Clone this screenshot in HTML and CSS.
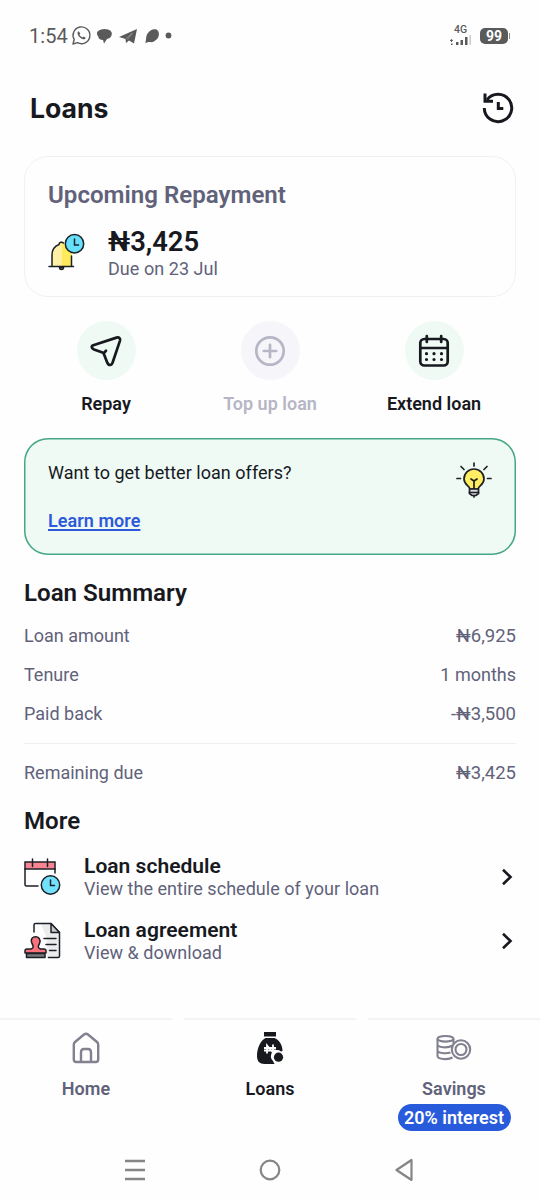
FILE: index.html
```html
<!DOCTYPE html>
<html lang="en">
<head>
<meta charset="utf-8">
<title>Loans</title>
<link rel="stylesheet" href="styles.css">
</head>
<body>
<div class="screen">
  <header class="status">
    <span class="status-time">1:54</span>
    <svg class="status-apps" width="106" height="22" viewBox="0 0 106 22" fill="none">
      <path d="M2 19 3.200 14.500A8.400 8.400 0 1 1 6.500 17.700Z" stroke="#5a5a5a" stroke-width="1.400" stroke-linejoin="round"/>
      <path d="M7.500 6.300c-2 1.500-.5 4.400 1.500 6.200s4.500 2.700 5.800.6l-2-1.600-1.400 1c-1.500-.7-2.300-1.600-2.900-2.900l.9-1.200Z" fill="#5a5a5a"/>
      <path d="M26 8c0-2 3-3 4-3.500 3-1 5-.5 7 0 3.500 1 4.500 3.500 3.500 6-1 2.500-2.500 3-4.500 3.500L33 18.500 32 15c-3 0-4.500-1-4.800-3.700C26 10 26 9 26 8Z" fill="#5a5a5a"/>
      <path d="M48 12 66 4 63 18.500 58 15.500 55 18 54.500 14Z" fill="#5a5a5a"/>
      <path d="m54.500 14 7-6-5 6.500" stroke="#aaa" stroke-width=".6"/>
      <path d="M74 17.500c2-2 0-6 3-9.500 2-3.500 6-4.500 8.500-3.500 3.500 2 3 7.500 0 10-2 2-4 3-7 2.500-1.500 0-2.500 1-4.500.5Z" fill="#5a5a5a"/>
      <circle cx="97.500" cy="10.500" r="2.900" fill="#5a5a5a"/>
    </svg>
    <span class="spacer"></span>
    <div class="signal">
      <span class="signal-label">4G</span>
      <svg width="22" height="11" viewBox="0 0 22 11"><g fill="#5a5a5a"><path d="M0 5.500 1.500 4 3 5.500V6H2v1H1V6H0ZM1 8.500h1.500V10H1Z"/><path d="M6 7h2.500v3H6ZM10.500 5H13v5h-2.500ZM15 2h2.500v8H15Z"/></g><path d="M19.500 0H21v10h-1.500Z" fill="#c9c9c9"/></svg>
    </div>
    <div class="battery">99</div>
  </header>

  <div class="title-bar">
    <h1>Loans</h1>
    <svg width="34" height="34" viewBox="0 0 34 34" fill="none" stroke="#17191f" stroke-width="3">
      <path d="M3.300 17A13.700 13.700 0 1 0 6 8.800"/>
      <path d="M4 2.500v7.800h8"/>
      <path d="M17.300 11v6.500h5"/>
    </svg>
  </div>

  <section class="repayment">
    <h2>Upcoming Repayment</h2>
    <div class="repayment-body">
      <svg width="38" height="38" viewBox="0 0 38 38" fill="none" stroke="#1d2026" stroke-width="1.500" stroke-linecap="round">
        <path d="M4 33V22C4 16 8 12.500 11 11.500c0-3 5-3 5-.5l8 10v12Z" fill="#ffea5b" stroke="none"/>
        <path d="M4 33V22C4 16 8 12.500 11 11.500l3-.5v22Z" fill="#fff0a5" stroke="none"/>
        <path d="M1 33.500h24.500M4 32.500V22c0-5 3-9 7-10.500 0-2.500 3-3 4.500-1.500M23.500 23v9.500"/>
        <path d="M11.500 34.500a2 2 0 0 0 4 0Z" fill="#e5a827"/>
        <circle cx="26.500" cy="10.800" r="9.200" fill="#67e0fb"/>
        <path d="M26.500 6v6h4"/>
      </svg>
      <div>
        <div class="amount">₦3,425</div>
        <div class="due">Due on 23 Jul</div>
      </div>
    </div>
  </section>

  <nav class="actions">
    <div class="action">
      <div class="disc"><svg width="34" height="34" viewBox="0 0 34 34" fill="none" stroke="#17191f" stroke-width="2.700" stroke-linejoin="round" stroke-linecap="round"><path d="M4.300 11.300 27.500 3.600C30 2.800 31.600 4.200 31 6.600L23.800 28C22.700 32 19.500 32 18 28L15 20.300C14.800 19.500 14.300 19 13.500 18.600L5 15.400C2.300 14.300 2 12.200 4.300 11.300ZM14.600 19.200 17 16.800"/></svg></div>
      <span>Repay</span>
    </div>
    <div class="action action-off">
      <div class="disc"><svg width="34" height="34" viewBox="0 0 34 34" fill="none" stroke="#b6b6c6" stroke-width="2.700" stroke-linecap="round"><circle cx="17" cy="17" r="13.700"/><path d="M10.800 17h12.400M17 10.800v12.400"/></svg></div>
      <span>Top up loan</span>
    </div>
    <div class="action">
      <div class="disc"><svg width="34" height="34" viewBox="0 0 34 34" fill="none" stroke="#17191f" stroke-width="2.700" stroke-linecap="round"><rect x="3.300" y="5" width="27.400" height="26.500" rx="4"/><path d="M3.500 14h27M9.800 2v6M24.200 2v6"/><path d="M9.500 19.700h.01M17 19.700h.01M24.500 19.700h.01M9.500 25.500h.01M17 25.500h.01M24.500 25.500h.01" stroke-width="3.200"/></svg></div>
      <span>Extend loan</span>
    </div>
  </nav>

  <section class="offer">
    <div>
      <p>Want to get better loan offers?</p>
      <a class="learn">Learn more</a>
    </div>
    <svg width="36" height="38" viewBox="0 0 36 38" fill="none" stroke="#1d2026" stroke-width="1.700" stroke-linecap="round">
      <path d="M18 2v3M5 5.500 8 8.500M31 5.500 28 8.500M1 17.500h3.500M31.500 17.500H35"/>
      <path d="M14 28c0-3-6-4-6-10a10 10 0 0 1 20 0c0 6-6 7-6 10Z" fill="#ffee62"/>
      <path d="M18 28v-8l-3-2M18 20l3-2"/>
      <path d="M13.500 28h9v4.500l-2.500 2h-4l-2.500-2Z" fill="#d6d7dc"/>
      <path d="M13.500 31.500h9M18 35v1"/>
    </svg>
  </section>

  <section class="summary">
    <h3>Loan Summary</h3>
    <dl>
      <div class="row"><dt>Loan amount</dt><dd class="money">₦6,925</dd></div>
      <div class="row"><dt>Tenure</dt><dd>1 months</dd></div>
      <div class="row"><dt>Paid back</dt><dd class="money">-₦3,500</dd></div>
      <div class="row row-total"><dt>Remaining due</dt><dd class="money">₦3,425</dd></div>
    </dl>
  </section>

  <section class="more">
    <h3>More</h3>
    <div class="item">
      <svg width="38" height="38" viewBox="0 0 38 38" fill="none" stroke="#1d2026" stroke-width="1.500" stroke-linecap="round">
        <path d="M1 4h30v7H1Z" fill="#fa8491"/>
        <path d="M1 11v15.500q0 1.500 1.500 1.500H14M31 11v4M8.500 1v7.500M23.500 1v7.500"/>
        <circle cx="26.500" cy="27" r="9.200" fill="#72e2fc"/>
        <path d="M26.500 22v5.500h4"/>
      </svg>
      <div class="item-text"><strong>Loan schedule</strong><span>View the entire schedule of your loan</span></div>
      <svg width="12" height="18" viewBox="0 0 12 18" fill="none" stroke="#17191f" stroke-width="2.600"><path d="m2 1.800 7.500 7.200L2 16.200"/></svg>
    </div>
    <div class="item">
      <svg width="38" height="38" viewBox="0 0 38 38" fill="none" stroke="#1d2026" stroke-width="1.500" stroke-linecap="round" stroke-linejoin="round">
        <path d="M17 1.500h10l8.500 9V35.500H23V17Z" fill="#ececee" stroke="none"/>
        <path d="M10 10V3q0-1.500 1.500-1.500H27l8.500 9V34q0 1.500-1.500 1.500H24.500"/>
        <path d="M27 1.500v9h8.500Z" fill="#c9c9cd"/>
        <path d="M20 16.500h12M22 22.500h10M25.500 28.500H32"/>
        <path d="M1 31v-2q0-2 2-2h4c3-1 2.500-3 1-5.500-4-9 11-9 7.500 0-1.500 2.500-2 4.500 1 5.500h3.500q2 0 2 2v2Z" fill="#fb717e"/>
        <path d="M2.500 31.500h18.500V35.500H2.500Z" fill="#77777b"/>
      </svg>
      <div class="item-text"><strong>Loan agreement</strong><span>View &amp; download</span></div>
      <svg width="12" height="18" viewBox="0 0 12 18" fill="none" stroke="#17191f" stroke-width="2.600"><path d="m2 1.800 7.500 7.200L2 16.200"/></svg>
    </div>
  </section>

  <nav class="tabs">
    <div class="tab">
      <svg width="36" height="36" viewBox="0 0 36 36" fill="none" stroke="#81818f" stroke-width="2.400" stroke-linejoin="round"><path d="M5.800 14.800Q5.800 13 7 12L16 4.500Q18 3 20 4.500L29 12Q30.200 13 30.200 14.800V29.500Q30.200 32 27.700 32H8.300Q5.800 32 5.800 29.500ZM13 31.500V22.500Q13 19 16 19h4Q23 19 23 22.500v9"/></svg>
      <span>Home</span>
    </div>
    <div class="tab tab-active">
      <svg width="36" height="36" viewBox="0 0 36 36"><path d="M12 2h12v4.500H12ZM13.500 8h9C28 10.500 30.500 15.500 30.500 21L29 21.500A6 6 0 0 0 21 31L22.500 34H12.500C7.500 34 5 31 5 26 5 18 8.500 10.500 13.500 8Z" fill="#17191f"/><circle cx="26.500" cy="27.200" r="4.600" fill="#17191f"/><path d="M15 23.500V15.500L21 22.500V14.500M12 18h12M12 20.500h12" stroke="#fff" stroke-width="1.800" fill="none"/></svg>
      <span>Loans</span>
    </div>
    <div class="tab">
      <svg width="36" height="36" viewBox="0 0 36 36" fill="none" stroke="#81818f" stroke-width="2.100"><ellipse cx="9.500" cy="8.800" rx="8" ry="2.800"/><path d="M1.500 9v17c0 3.500 11 4 15 1.500M17.500 9v5M1.500 14.500c0 3 10 4 15 1M1.500 20.500c0 2.500 8 3.500 13 2"/><circle cx="25" cy="19.500" r="9.200"/><circle cx="25" cy="19.500" r="5.500"/></svg>
      <span>Savings</span>
      <b class="interest">20% interest</b>
    </div>
  </nav>

  <div class="system-nav">
    <svg width="22" height="24" viewBox="0 0 22 24" stroke="#858585" stroke-width="2.400"><path d="M1 3h20M1 12h20M1 21h20"/></svg>
    <svg width="24" height="24" viewBox="0 0 24 24" fill="none" stroke="#858585" stroke-width="2.200"><circle cx="12" cy="12" r="9.300"/></svg>
    <svg width="22" height="24" viewBox="0 0 22 24" fill="none" stroke="#858585" stroke-width="2.200" stroke-linejoin="round"><path d="M17.500 2v20L2.500 12Z"/></svg>
  </div>
</div>
</body>
</html>
```
FILE: styles.css
```css
* { box-sizing: border-box; }
body, h1, h2, h3, p, dl, dd { margin: 0; }
body { background: #fefefe; color: #17191f; font-family: Roboto, sans-serif; font-size: 18px; }
svg { display: block; flex: none; }
.screen { width: 540px; height: 1200px; display: flex; flex-direction: column; overflow: hidden; }

.status { height: 71px; padding: 0 30px 0 29px; display: flex; align-items: center; color: #5a5a5a; }
.status-time { font-size: 20px; letter-spacing: .1px; width: 42px; }
.spacer { flex: 1; }
.signal { width: 24px; height: 21px; display: flex; flex-direction: column; margin-right: 6px; }
.signal-label { font-size: 10.500px; font-weight: 500; line-height: 10px; padding-left: 4px; }
.battery { position: relative; width: 28px; height: 16px; border-radius: 5px; background: #5a5a5a; color: #fff; font-size: 14px; font-weight: 700; line-height: 17px; text-align: center; margin-right: 2px; }
.battery::after { content: ""; position: absolute; right: -2px; top: 5px; width: 1px; height: 6px; background: #8b8b8b; }

.title-bar { height: 85px; padding: 20px 25px 31px 30px; display: flex; align-items: center; justify-content: space-between; }
.title-bar h1 { font: 700 26.600px/34px Inter, sans-serif; }

.repayment { height: 141px; margin: 0 24px; padding: 22px 23px; border: 1px solid #f1f1f4; border-radius: 24px; }
.repayment h2 { font-size: 24.100px; line-height: 32px; font-weight: 600; color: #61627a; }
.repayment-body { display: flex; align-items: flex-start; gap: 22px; }
.repayment-body > div { padding-top: 16px; }
.repayment-body svg { margin-top: 22px; }
.amount { font-size: 27.400px; font-weight: 600; line-height: 31px; }
.due { color: #61627a; line-height: 22px; letter-spacing: .05px; }

.actions { height: 141px; padding: 24px 24px 0; display: grid; grid-template-columns: repeat(3, 1fr); }
.action { display: flex; flex-direction: column; align-items: center; gap: 12px; font-weight: 600; line-height: 24px; }
.disc { width: 59px; height: 59px; border-radius: 50%; background: #effaf5; display: grid; place-items: center; }
.action-off { color: #b6b6c6; }
.action-off .disc { background: #f6f6fa; }

.offer { height: 117px; margin: 0 24px; padding: 23px 24px 0 24px; display: flex; justify-content: space-between; background: #effaf5; box-shadow: inset 0 0 0 1.500px #45a783; border-radius: 24px; line-height: 24px; }
.offer p { margin-bottom: 24px; letter-spacing: .03px; }
.learn { color: #2e59d9; font-weight: 600; letter-spacing: .05px; text-decoration: underline; text-decoration-thickness: 1.500px; text-underline-offset: 2px; }

.summary { padding: 22px 24px 0; color: #61627a; }
h3 { font-size: 24.100px; line-height: 33px; font-weight: 600; color: #17191f; }
.summary dl { padding-top: 6px; }
.row { height: 39px; display: flex; justify-content: space-between; line-height: 39px; }
.money { font-size: 18.500px; line-height: 41px; }
.row-total { height: 60px; margin-top: 10px; border-top: 1px solid #f0f0f3; line-height: 58px; }
.row-total .money { line-height: 58px; }

.more { padding: 2px 24px 0; }
.item { height: 64px; display: flex; align-items: center; padding-right: 3px; }
.more h3 { margin-bottom: 7px; }
.item-text { flex: 1; padding-left: 22px; display: flex; flex-direction: column; color: #61627a; line-height: 22px; letter-spacing: .03px; }
.item-text strong { font-size: 21px; font-weight: 600; line-height: 24px; color: #17191f; }

.tabs { height: 121px; margin-top: auto; display: grid; grid-template-columns: repeat(3, 1fr); gap: 12px; }
.tab { border-top: 2px solid #f4f4f6; padding-top: 10px; display: flex; flex-direction: column; align-items: center; color: #61627a; font-weight: 600; line-height: 24px; }
.tab span { margin-top: 11px; }
.tab-active { color: #17191f; }
.interest { margin-top: 3px; width: 113px; height: 27px; border-radius: 14px; background: #285bdc; color: #fff; font-weight: 600; line-height: 27px; text-align: center; white-space: nowrap; }

.system-nav { height: 61px; display: flex; justify-content: center; gap: 112px; padding: 19px 0 0; }
```
